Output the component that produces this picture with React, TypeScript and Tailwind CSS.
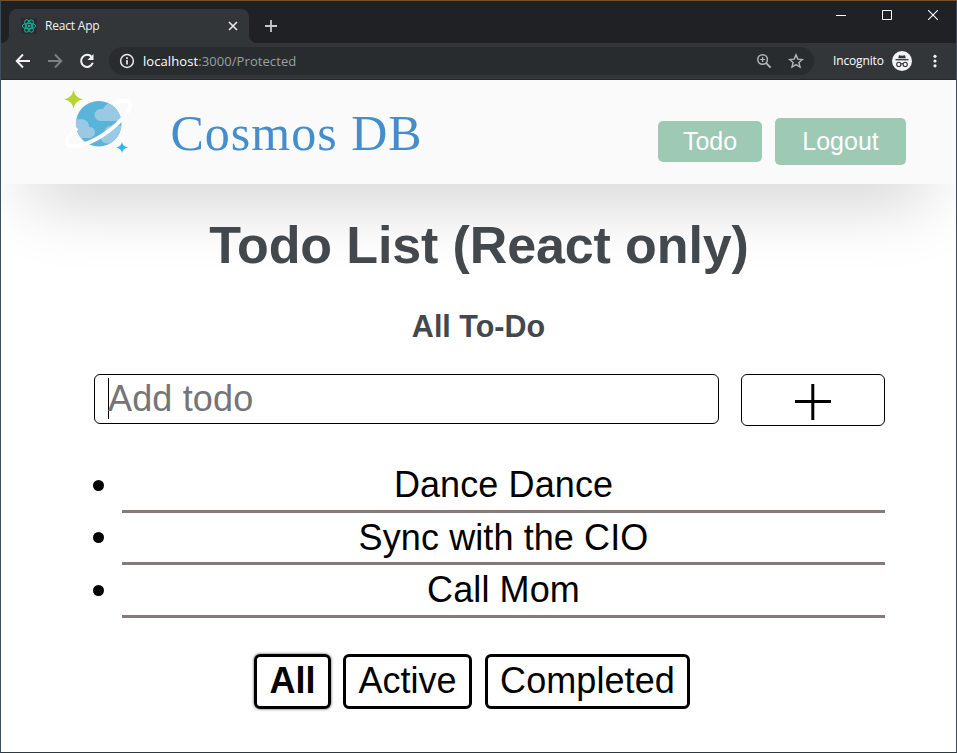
import React from "react";

function ReactIcon() {
  return (
    <svg className="h-4 w-4 shrink-0 bg-[#282c34]" viewBox="0 0 16 16" fill="none" stroke="#12b594" strokeWidth="1">
      <ellipse cx="8" cy="8" rx="6.8" ry="2.7" />
      <ellipse cx="8" cy="8" rx="6.8" ry="2.7" transform="rotate(60 8 8)" />
      <ellipse cx="8" cy="8" rx="6.8" ry="2.7" transform="rotate(120 8 8)" />
      <circle cx="8" cy="8" r="1.3" fill="#12b594" stroke="none" />
    </svg>
  );
}

function TitleBar() {
  return (
    <div className="flex h-[42px] shrink-0 bg-[#202124]">
      <div className="flex items-end">
        <svg className="h-2 w-2" viewBox="0 0 8 8"><path d="M8 0A8 8 0 0 1 0 8H8Z" fill="#323639" /></svg>
        <div className="flex h-[34px] w-[240px] items-center rounded-t-lg bg-[#323639] pl-3 pr-[11px]">
          <ReactIcon />
          <span className="ml-2 grow whitespace-nowrap text-[12px] tracking-[-0.2px] text-[#f1f3f4]">React App</span>
          <svg className="h-[10px] w-[10px]" viewBox="0 0 10 10" stroke="#e8eaed" strokeWidth="1.6"><path d="M1 1L9 9M9 1L1 9" /></svg>
        </div>
        <svg className="h-2 w-2" viewBox="0 0 8 8"><path d="M0 0A8 8 0 0 0 8 8H0Z" fill="#323639" /></svg>
      </div>
      <svg className="ml-[8px] mt-[19px] h-3 w-3" viewBox="0 0 12 12" stroke="#c6c8ca" strokeWidth="1.8"><path d="M6 0V12M0 6H12" /></svg>
      <div className="ml-auto mr-[18px] mt-[9px] flex h-[10px] gap-[36px]">
        <svg className="h-[10px] w-[10px]" viewBox="0 0 10 10" stroke="#fff"><path d="M0 5.5H10" /></svg>
        <svg className="h-[10px] w-[10px]" viewBox="0 0 10 10" stroke="#fff" fill="none"><path d="M.5 .5H9.5V9.5H.5Z" /></svg>
        <svg className="h-[10px] w-[10px]" viewBox="0 0 10 10" stroke="#fff" strokeWidth="1.1"><path d="M0 0L10 10M10 0L0 10" /></svg>
      </div>
    </div>
  );
}

function Toolbar() {
  return (
    <div className="flex h-[37px] shrink-0 items-center border-b border-[#25282b] bg-[#323639]">
      <svg className="ml-[14px] h-4 w-4" viewBox="0 0 16 16" fill="none" stroke="#f1f3f4" strokeWidth="1.9"><path d="M15 8H2M8 1.5L1.7 8L8 14.5" /></svg>
      <svg className="ml-4 h-4 w-4" viewBox="0 0 16 16" fill="none" stroke="#7d8083" strokeWidth="1.9"><path d="M1 8H14M8 1.5L14.3 8L8 14.500" /></svg>
      <svg className="ml-4 h-4 w-4" viewBox="0 0 16 16" fill="none" stroke="#f1f3f4" strokeWidth="2"><path d="M12.7 4A6 6 0 1 0 13.8 9.8" /><path d="M14.500 1V7H8.500Z" fill="#f1f3f4" stroke="none" /></svg>
      <div className="ml-[14px] flex h-7 w-[705px] items-center rounded-full bg-[#282c2f] px-[10px]">
        <svg className="h-4 w-4" viewBox="0 0 16 16" fill="none" stroke="#e8eaed" strokeWidth="1.5"><circle cx="8" cy="8" r="6.4" /><path d="M8 7V11.5M8 4.3V5.9" strokeWidth="1.7" /></svg>
        <span className="ml-2 mt-px grow whitespace-nowrap text-[13px] tracking-[0.08px] text-[#9aa0a6]"><span className="text-white">localhost</span>:3000/Protected</span>
        <svg className="mr-4 h-4 w-4" viewBox="0 0 16 16" fill="none" stroke="#b4b7ba" strokeWidth="1.5"><circle cx="6.6" cy="6.5" r="4.8" /><path d="M10.2 10.2L14.6 14.6" strokeWidth="1.9" /><path d="M6.6 4V9M4.1 6.5H9.1" strokeWidth="1.2" /></svg>
        <svg className="h-4 w-4" viewBox="0 0 16 16" fill="none" stroke="#b4b7ba" strokeWidth="1.4"><path d="M8 1.9L9.8 6.1L14.4 6.5L10.9 9.5L12 14L8 11.6L4 14L5.1 9.5L1.6 6.5L6.2 6.1Z" /></svg>
      </div>
      <span className="ml-[19px] w-[51px] whitespace-nowrap text-[12px] tracking-[-0.15px] text-white">Incognito</span>
      <svg className="ml-2 h-5 w-5" viewBox="0 0 20 20">
        <circle cx="10" cy="10" r="10" fill="#f1f3f4" />
        <path d="M7 4.2L10 4.8L13 4.2L13.8 7.3H6.2Z" fill="#323639" />
        <path d="M3.5 8.7H16.5" stroke="#323639" strokeWidth="1.3" />
        <g fill="none" stroke="#323639" strokeWidth="1.1"><circle cx="6.8" cy="13.4" r="2.1" /><circle cx="13.2" cy="13.4" r="2.1" /><path d="M8.9 13Q10 12.3 11.1 13" /></g>
      </svg>
      <svg className="ml-[20.5px] h-[14px] w-1" viewBox="0 0 4 14" fill="#f1f3f4"><circle cx="2" cy="2.3" r="1.6" /><circle cx="2" cy="7" r="1.6" /><circle cx="2" cy="11.8" r="1.6" /></svg>
    </div>
  );
}

function CosmosLogo() {
  return (
    <svg className="h-[70px] w-[74px]" viewBox="60 87 74 70">
      <defs><clipPath id="planet"><circle cx="98.7" cy="123.7" r="22.8" /></clipPath></defs>
      <circle cx="98.7" cy="123.7" r="22.8" fill="#5ab4d9" />
      <g clipPath="url(#planet)" fill="#99c9e3">
        <path d="M123 121H100.500A6 6 0 0 1 100.500 109H103.200A9 9 0 0 1 112 103H123Z" />
        <path d="M74 119.200H83A7.500 7.500 0 0 1 89 127A5.500 5.500 0 0 1 90 138H74Z" />
        <path d="M109 143.500H106A5.500 5.500 0 0 1 101 138Q101 134 104.500 132.500Q105 126 112 125.500H123V143.500Z" />
      </g>
      <path d="M112.500 104C121 100 129 99.500 130 104C131.500 111 117 126.500 99 137.500C84 146 70 149 67 143.500C65.500 140 70 134 77 128" fill="none" stroke="#fff" strokeWidth="4" />
      <path d="M73.500 90Q75 97.800 83 99.300Q75 100.800 73.500 108.500Q72 100.800 64 99.300Q72 97.800 73.500 90Z" fill="#b8d432" />
      <path d="M122 142Q122.900 146.700 127.800 147.500Q122.900 148.300 122 153Q121.100 148.300 116.200 147.500Q121.100 146.700 122 142Z" fill="#2bb7ec" />
    </svg>
  );
}

function Header() {
  return (
    <header className="flex h-[104px] shrink-0 bg-[#fafafa] pl-[59px] pr-[50px] shadow-[0_39px_70px_-29px_rgba(0,0,0,0.25)]">
      <div className="mt-[7px]"><CosmosLogo /></div>
      <span className="ml-[36.5px] mt-[24px] whitespace-nowrap font-['Liberation_Serif',serif] text-[50px] leading-[58px] tracking-[1px] text-[#468dcb]">Cosmos DB</span>
      <nav className="ml-auto mt-[19px] flex items-center gap-[13px] text-[25px] text-white">
        <button className="h-[41px] w-[104px] rounded-[5px] bg-[#9dc9b5] leading-[41px]">Todo</button>
        <button className="h-[47px] w-[131px] rounded-[5px] bg-[#9dc9b5] leading-[47px]">Logout</button>
      </nav>
    </header>
  );
}

const todos = ["Dance Dance", "Sync with the CIO", "Call Mom"];

function TodoPage() {
  return (
    <main className="flex flex-col pl-[93px] pr-[71px] text-[36px] text-black">
      <h1 className="mr-[21px] mt-[31px] text-center text-[52px] font-bold leading-[60px] tracking-[-0.12px] text-[#43484d]">Todo List (React only)</h1>
      <h2 className="mr-[22px] mt-[33px] text-center text-[30.5px] font-bold leading-[36px] text-[#43484d]">All To-Do</h2>
      <form className="mt-[30px] flex items-start justify-between">
        <div className="flex h-[50px] w-[625px] items-center rounded-[6px] border border-black pl-[13px]">
          <span className="-mt-px h-[41px] w-px bg-black" />
          <span className="-ml-px leading-[48px] tracking-[0.15px] text-[#757575]">Add todo</span>
        </div>
        <button type="button" className="flex h-[52px] w-[144px] items-center justify-center rounded-[6px] border border-black" aria-label="Add">
          <svg className="mt-[3px] h-9 w-9" viewBox="0 0 36 36"><path d="M0 17.500H36M17.800 0V36" stroke="#000" strokeWidth="3" /></svg>
        </button>
      </form>
      <ul className="mt-[34px]">
        {todos.map((t) => (
          <li key={t} className="flex h-[52.5px] items-center">
            <span className="-ml-px mb-[2px] h-[11px] w-[11px] rounded-full bg-black" />
            <span className="ml-[18px] h-full grow border-b-[3px] border-[#857a7a] text-center leading-[49px] tracking-[0.1px]">{t}</span>
          </li>
        ))}
      </ul>
      <div className="ml-[160px] mt-[36px] flex">
        <button className="h-[55px] w-[77px] rounded-[6px] border-[3px] border-black font-bold leading-[48px] shadow-[0_0_3px_rgba(0,0,0,0.7)]">All</button>
        <button className="ml-3 h-[55px] w-[129px] rounded-[6px] border-[3px] border-black leading-[48px]">Active</button>
        <button className="ml-[13px] h-[55px] w-[205px] rounded-[6px] border-[3px] border-black leading-[48px] tracking-[0.08px]">Completed</button>
      </div>
    </main>
  );
}

export default function App() {
  return (
    <div className="flex h-[753px] w-[957px] flex-col overflow-hidden border border-b-[#2c3b42] border-l-[#3a4f64] border-r-[#3f4f5c] border-t-[#765325] bg-white font-['Liberation_Sans',Arial,sans-serif]">
      <div className="z-10 shrink-0 font-['Open_Sans','Noto_Sans',sans-serif]">
        <TitleBar />
        <Toolbar />
      </div>
      <Header />
      <TodoPage />
    </div>
  );
}
